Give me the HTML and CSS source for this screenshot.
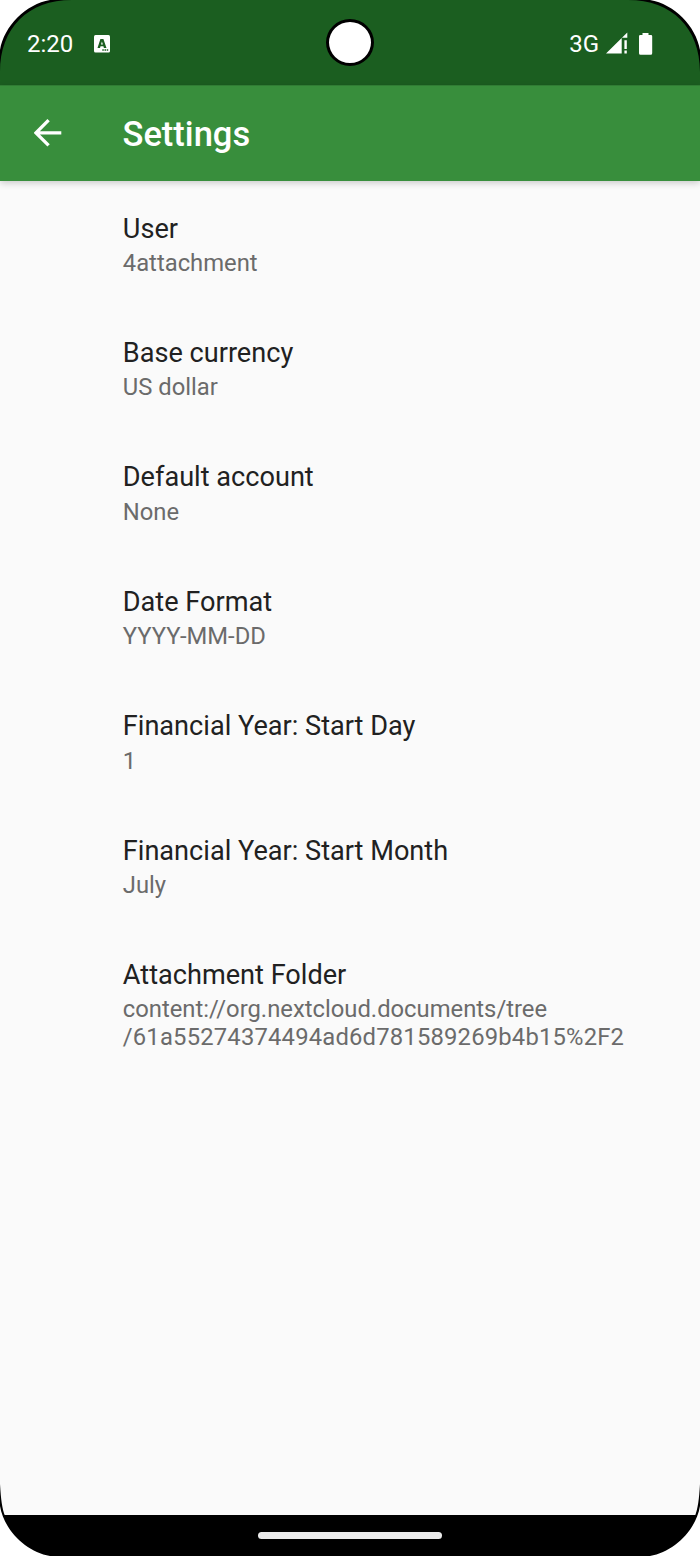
FILE: index.html
```html
<!DOCTYPE html>
<html lang="en">
<head>
<meta charset="utf-8">
<title>Settings</title>
<link rel="stylesheet" href="styles.css">
</head>
<body>
<div class="phone">
  <header class="status">
    <span class="clock">2:20</span>
    <svg class="notice" width="16" height="18" viewBox="0 0 16 18"><rect width="16" height="17.5" rx="1.5" fill="#fff"/><path fill="#1b5e20" fill-rule="evenodd" d="M6.4 4h3l3.1 9h-2.600l-.5-1.700H6.500L6 13H3.500zM7.900 6.400 7 9.500h1.900zM8.300 14.300h1.500v1.500H8.300zM10.500 14.300H12v1.500h-1.500zM12.700 14.300h1.500v1.500h-1.500z"/></svg>
    <span class="network">3G</span>
    <svg class="signal" width="22" height="22" viewBox="0 0 22 22" fill="#fff"><path d="M0 20.500 15.700 5V20.500zM15.700 5 21.300-.4V4.700h-5.600zM18.400 7.300h2.400v8.700h-2.400zM18.400 17.600h2.400v2.900h-2.400z"/></svg>
    <svg class="battery" width="14" height="22" viewBox="0 0 14 22"><path fill="#fff" d="M3.500 0h6v2H12q1.200 0 1.200 1.200v17.100q0 1.500-1.500 1.500H1.500Q0 21.800 0 20.300V3.200Q0 2 1.200 2h2.300z"/></svg>
    <span class="camera"></span>
  </header>
  <div class="toolbar">
    <svg class="back" width="28" height="28" viewBox="0 0 28 28" fill="none" stroke="#fff" stroke-width="3.300"><path d="M27.300 13.800H2.500M14.600 1.200 2 13.800l12.600 12.600"/></svg>
    <h1 class="heading">Settings</h1>
  </div>
  <main class="list">
    <section class="item"><h2 class="title">User</h2><p class="summary">4attachment</p></section>
    <section class="item"><h2 class="title">Base currency</h2><p class="summary">US dollar</p></section>
    <section class="item"><h2 class="title">Default account</h2><p class="summary">None</p></section>
    <section class="item"><h2 class="title">Date Format</h2><p class="summary">YYYY-MM-DD</p></section>
    <section class="item"><h2 class="title">Financial Year: Start Day</h2><p class="summary">1</p></section>
    <section class="item"><h2 class="title">Financial Year: Start Month</h2><p class="summary">July</p></section>
    <section class="item"><h2 class="title">Attachment Folder</h2><p class="summary">content://org.nextcloud.documents/tree<br><span class="path-id">/61a55274374494ad6d781589269b4b15%2F2</span></p></section>
  </main>
  <footer class="nav"><span class="handle"></span></footer>
  <svg class="bezel" width="700" height="1556" viewBox="0 0 700 1556">
    <path fill="#000" d="M0 0H72C28 0 0 28 0 72zM700 0H628C672 0 700 28 700 72zM0 1484C1 1500 2 1508 5 1516L0 1520zM700 1484C699 1500 698 1508 695 1516L700 1520z"/>
    <path fill="#fff" d="M0 0H50C26 4 4 26 0 50zM700 0H650C674 4 696 26 700 50zM0 1506C4 1530 26 1552 50 1556H0zM700 1506C696 1530 674 1552 650 1556H700z"/>
  </svg>
</div>
</body>
</html>
```
FILE: styles.css
```css
body {
  margin: 0;
  font-family: Roboto, "Liberation Sans", sans-serif;
}
.phone {
  position: relative;
  display: flex;
  flex-direction: column;
  width: 700px;
  height: 1556px;
  overflow: hidden;
  background: #fafafa;
}
.status {
  position: relative;
  box-sizing: border-box;
  display: flex;
  align-items: center;
  height: 85px;
  padding: 2px 47px 0 27px;
  background: #1b5e20;
  color: #fff;
  font-size: 24px;
}
.notice { margin-left: 20.500px; }
.network { margin-left: auto; }
.signal {
  margin-left: 7px;
  overflow: visible;
}
.battery { margin-left: 11px; }
.camera {
  position: absolute;
  left: 326px;
  top: 19px;
  box-sizing: border-box;
  width: 48px;
  height: 47px;
  border: 3px solid #000;
  border-radius: 50%;
  background: #fff;
}
.toolbar {
  position: relative;
  box-sizing: border-box;
  display: flex;
  align-items: center;
  height: 96px;
  padding: 0 0 1px 34px;
  background: #388e3c;
  border-top: 1px solid #307c34;
  box-shadow: 0 2px 7px rgba(0, 0, 0, 0.2);
}
.heading {
  margin: 2px 0 0 60.500px;
  color: #fff;
  font-size: 34.500px;
  font-weight: 500;
  line-height: 40px;
}
.list {
  flex: 1;
  padding: 29.500px 60px 0 122.800px;
}
.item { height: 124.450px; }
.title {
  margin: 0 0 3.300px;
  color: #212121;
  font-size: 27.130px;
  font-weight: 400;
  line-height: 36px;
}
.summary {
  margin: 0;
  color: #6b6b6b;
  font-size: 23.800px;
  line-height: 27.900px;
}
.path-id { letter-spacing: 0.190px; }
.nav {
  display: flex;
  justify-content: center;
  height: 41px;
  background: #000;
}
.handle {
  width: 184px;
  height: 7px;
  margin-top: 17px;
  border-radius: 4px;
  background: #ebebeb;
}
.bezel {
  position: absolute;
  left: 0;
  top: 0;
}
```
